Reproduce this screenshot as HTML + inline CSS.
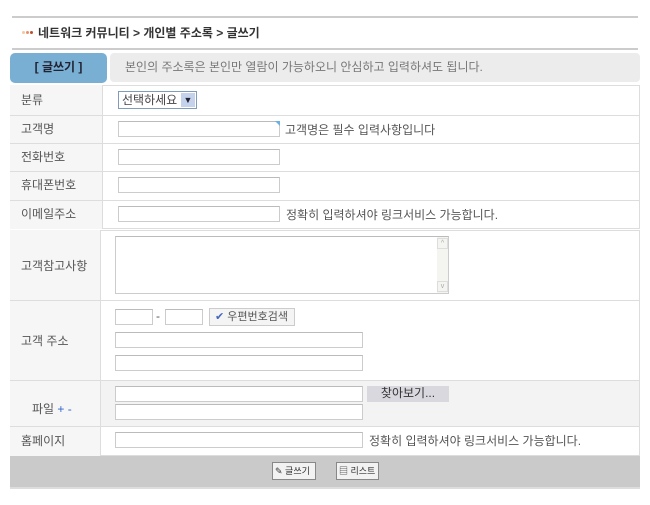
<!DOCTYPE html>
<html><head><meta charset="utf-8"><style>
*{margin:0;padding:0;box-sizing:border-box}
body{width:650px;height:505px;background:#fff;position:relative;font-family:"Liberation Sans","Noto Sans CJK KR","NanumGothic",sans-serif;font-size:12px;color:#555;overflow:hidden}
.a{position:absolute;white-space:nowrap}
.inp{position:absolute;border:1px solid #ccc;border-top-color:#bbb;background:#fff;height:16px}
.lbl{position:absolute;font-size:12px;color:#555;white-space:nowrap}
.hl{position:absolute;height:1px;background:#ddd;left:10px;width:630px}
</style></head><body>
<div class="a" style="left:12px;top:16px;width:626px;height:2px;background:#ccc"></div>
<div class="a" style="left:22px;top:31px;width:3px;height:3px;border-radius:2px;background:#f5c8a0"></div>
<div class="a" style="left:26px;top:31px;width:3px;height:3px;border-radius:2px;background:#e8906a"></div>
<div class="a" style="left:30px;top:31px;width:3px;height:3px;border-radius:2px;background:#c0502a"></div>
<div class="a" style="left:38px;top:24px;font-size:12px;color:#333;font-weight:bold">네트워크 커뮤니티 &gt; 개인별 주소록 &gt; 글쓰기</div>
<div class="a" style="left:12px;top:48px;width:626px;height:2px;background:#ccc"></div>
<div class="a" style="left:10px;top:53px;width:97px;height:30px;background:#78afd3;border-radius:5px;color:#223;font-weight:bold;text-align:center;line-height:28px">[ 글쓰기 ]</div>
<div class="a" style="left:110px;top:53px;width:530px;height:29px;background:#ececec;border-radius:4px;color:#777;padding-left:15px;line-height:28px">본인의 주소록은 본인만 열람이 가능하오니 안심하고 입력하셔도 됩니다.</div>
<div class="a" style="left:10px;top:85px;width:630px;height:144px;border:1px solid #ddd;background:#fff"></div>
<div class="a" style="left:10px;top:85px;width:93px;height:144px;background:#f6f6f6;border-right:1px solid #ddd"></div>
<div class="hl" style="top:115px"></div><div class="hl" style="top:143px"></div><div class="hl" style="top:171px"></div><div class="hl" style="top:200px"></div>
<div class="lbl" style="left:21px;top:91px">분류</div>
<div class="lbl" style="left:21px;top:120px">고객명</div>
<div class="lbl" style="left:21px;top:148px">전화번호</div>
<div class="lbl" style="left:21px;top:176px">휴대폰번호</div>
<div class="lbl" style="left:21px;top:205px">이메일주소</div>
<div class="a" style="left:118px;top:91px;width:79px;height:18px;border:1px solid #7f9db9;background:#fff;font-size:12px;color:#444;padding-left:3px;line-height:16px">선택하세요<span style="position:absolute;right:1px;top:1px;width:14px;height:14px;background:#c4d2ec;color:#223;font-size:9px;text-align:center;line-height:14px">▼</span></div>
<div class="inp" style="left:118px;top:121px;width:162px"></div>
<div class="a" style="left:275px;top:121px;width:0;height:0;border-left:5px solid transparent;border-top:5px solid #6ab0e0"></div>
<div class="lbl" style="left:285px;top:121px">고객명은 필수 입력사항입니다</div>
<div class="inp" style="left:118px;top:149px;width:162px"></div>
<div class="inp" style="left:118px;top:177px;width:162px"></div>
<div class="inp" style="left:118px;top:206px;width:162px"></div>
<div class="lbl" style="left:286px;top:206px">정확히 입력하셔야 링크서비스 가능합니다.</div>
<div class="a" style="left:10px;top:230px;width:630px;height:226px;border:1px solid #ddd;background:#fff"></div>
<div class="a" style="left:11px;top:380px;width:628px;height:46px;background:#f3f3f3"></div>
<div class="a" style="left:10px;top:230px;width:91px;height:226px;background:#f6f6f6;border-right:1px solid #ddd"></div>
<div class="hl" style="top:300px"></div><div class="hl" style="top:380px"></div><div class="hl" style="top:426px"></div>
<div class="lbl" style="left:21px;top:257px">고객참고사항</div>
<div class="lbl" style="left:21px;top:332px">고객 주소</div>
<div class="lbl" style="left:32px;top:400px">파일 <span style="color:#3366cc">+ -</span></div>
<div class="lbl" style="left:21px;top:432px">홈페이지</div>
<div class="inp" style="left:115px;top:236px;width:334px;height:58px"></div>
<div class="a" style="left:437px;top:237px;width:11px;height:56px;background:#f4f4f0"></div>
<div class="a" style="left:437px;top:238px;width:11px;height:11px;border:1px solid #ddd;font-size:7px;color:#aaa;text-align:center;line-height:9px">^</div>
<div class="a" style="left:437px;top:281px;width:11px;height:11px;border:1px solid #ddd;font-size:7px;color:#aaa;text-align:center;line-height:9px">v</div>
<div class="inp" style="left:115px;top:309px;width:38px"></div>
<div class="lbl" style="left:156px;top:309px">-</div>
<div class="inp" style="left:165px;top:309px;width:38px"></div>
<div class="a" style="left:209px;top:308px;width:86px;height:18px;border:1px solid #ccc;background:#f4f4f4;font-size:11px;color:#555;padding-left:5px;line-height:16px"><span style="color:#4466bb">✔</span> 우편번호검색</div>
<div class="inp" style="left:115px;top:332px;width:248px"></div>
<div class="inp" style="left:115px;top:355px;width:248px"></div>
<div class="inp" style="left:115px;top:386px;width:248px"></div>
<div class="a" style="left:367px;top:386px;width:82px;height:16px;background:#d8d8de;color:#333;text-align:center;line-height:15px">찾아보기...</div>
<div class="inp" style="left:115px;top:404px;width:248px"></div>
<div class="inp" style="left:115px;top:432px;width:248px"></div>
<div class="lbl" style="left:369px;top:432px">정확히 입력하셔야 링크서비스 가능합니다.</div>
<div class="a" style="left:10px;top:456px;width:630px;height:33px;background:#cacaca;border-bottom:2px solid #ddd"></div>
<div class="a" style="left:272px;top:462px;width:44px;height:18px;border:1px solid #888;background:#f2f2f2;font-size:9px;color:#333;line-height:16px;padding-left:2px;overflow:hidden">✎ 글쓰기</div>
<div class="a" style="left:336px;top:462px;width:43px;height:18px;border:1px solid #888;background:#f2f2f2;font-size:9px;color:#333;line-height:16px;padding-left:2px;overflow:hidden">▤ 리스트</div>
</body></html>
